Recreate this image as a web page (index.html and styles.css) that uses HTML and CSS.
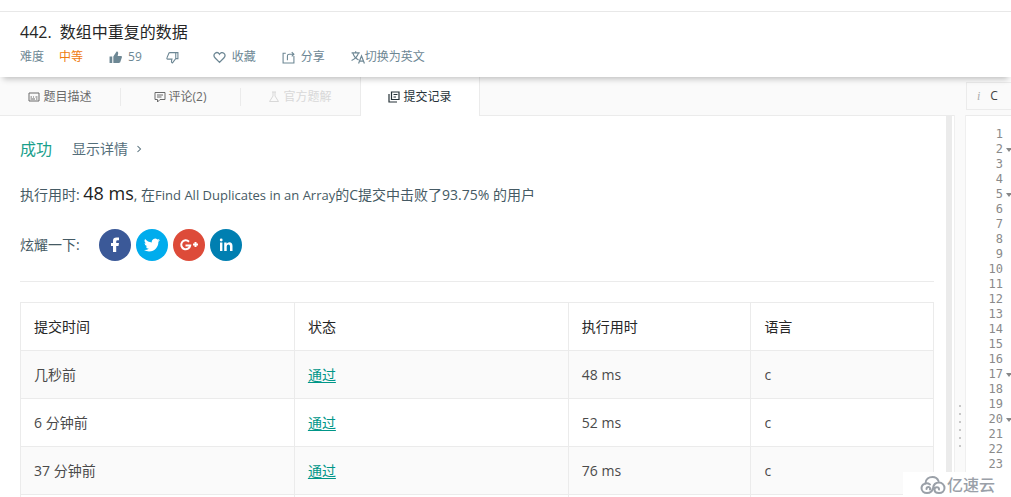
FILE: index.html
```html
<!DOCTYPE html>
<html lang="zh-CN">
<head>
<meta charset="utf-8">
<title>442. 数组中重复的数据</title>
<link rel="stylesheet" href="styles.css">
</head>
<body>
<div class="topbar"></div>
<header class="header">
  <h1 class="title"><span>442.</span><span>数组中重复的数据</span></h1>
  <div class="meta">
    <span class="level-label">难度</span>
    <span class="level">中等</span>
    <button class="action up"><svg viewBox="0 0 24 24" width="13" height="13"><path fill="currentColor" d="M1 10h5v12H1zM8 22V10l6-9c2 0 3 1 3 3l-1 5h6c1 0 2 1 2 2l-3 9c0 1-1 2-3 2z"/></svg>59</button>
    <button class="action down" aria-label="踩"><svg viewBox="0 0 24 24" width="13" height="13"><path fill="none" stroke="currentColor" stroke-width="2" d="M18 3v11l-6 8c-2 0-2-1-2-3l1-4H3c-1 0-2-1-1-3l3-7c0-1 1-2 2-2zM18 3h4v11h-4"/></svg></button>
    <button class="action fav"><svg viewBox="0 0 24 24" width="13" height="13"><path fill="none" stroke="currentColor" stroke-width="2.4" d="M12 21L4 13C1 10 1 6 4 4c3-2 6-1 8 2 2-3 5-4 8-2 3 2 3 6 0 9z"/></svg>收藏</button>
    <button class="action share"><svg viewBox="0 0 24 24" width="13" height="13"><path fill="none" stroke="currentColor" stroke-width="2" d="M7 4H2v18h20V9M10 17V9q0-3 3-3h8M18 2l4 4-4 4"/></svg>分享</button>
    <button class="action lang"><svg viewBox="0 0 24 24" width="14" height="14"><path fill="none" stroke="currentColor" stroke-width="2" d="M1 5h14M8 2v3M3 5q3 9 10 12M13 5Q10 14 1 18M13 23l5-13 5 13M15 19h6"/></svg>切换为英文</button>
  </div>
</header>
<main class="workspace">
  <section class="left">
    <nav class="tabs">
      <button class="tab"><svg viewBox="0 0 24 24" width="12" height="12"><path fill="none" stroke="currentColor" stroke-width="2" d="M2 4h20v16H2zM5 12h3m2 0h2m3 0h4M5 16h9m2 0h3"/></svg>题目描述</button>
      <button class="tab"><svg viewBox="0 0 24 24" width="12" height="12"><path fill="none" stroke="currentColor" stroke-width="2" d="M2 3h20v14H12l-5 5v-5H2zM6 8h12M6 12h9"/></svg>评论(2)</button>
      <button class="tab disabled" disabled><svg viewBox="0 0 24 24" width="12" height="12"><path fill="none" stroke="currentColor" stroke-width="2" d="M8 2h8M10 2v8L3 21h18L14 10V2"/></svg>官方题解</button>
      <button class="tab active"><svg viewBox="0 0 24 24" width="12" height="12"><path fill="none" stroke="currentColor" stroke-width="2.4" d="M7 2h15v15H7zM2 6v16h16M11 7h8M11 12h5"/></svg>提交记录</button>
    </nav>
    <div class="scroll">
      <div class="result">
        <span class="success">成功</span>
        <a class="detail" href="#detail">显示详情<svg viewBox="0 0 8 10" width="6" height="8"><path fill="none" stroke="currentColor" stroke-width="1.4" d="M2 1l4 4-4 4"/></svg></a>
      </div>
      <p class="runtime">执行用时: <span class="time">48 ms</span>, 在<span class="latin">Find All Duplicates in an Array</span>的C提交中击败了93.75% 的用户</p>
      <div class="social">
        <span class="social-label">炫耀一下:</span>
        <button class="round facebook" aria-label="Facebook"><svg viewBox="0 0 32 32" width="32" height="32"><path fill="#fff" d="M14 23v-6h-2v-3h2v-2.200q0-3.300 3.500-3.300H20v2.800h-1.500q-1.300 0-1.300 1.200V14H20l-.500 3h-2.300v6z"/></svg></button>
        <button class="round twitter" aria-label="Twitter"><svg viewBox="0 0 24 24" width="16" height="16"><path fill="#fff" d="M23.950 4.570a10 10 0 0 1-2.820.77 4.960 4.960 0 0 0 2.160-2.720c-.95.550-2 .950-3.130 1.180a4.920 4.920 0 0 0-8.380 4.480C7.690 8.100 4.070 6.130 1.640 3.160a4.920 4.920 0 0 0 1.520 6.570 4.900 4.900 0 0 1-2.230-.61v.06a4.920 4.920 0 0 0 3.950 4.830 5 5 0 0 1-2.210.08 4.930 4.930 0 0 0 4.600 3.420A9.870 9.870 0 0 1 0 19.540a14 14 0 0 0 7.550 2.210c9.050 0 14-7.500 14-13.980v-.64a10 10 0 0 0 2.400-2.560z"/></svg></button>
        <button class="round google" aria-label="Google+"><svg viewBox="0 0 32 32" width="32" height="32"><path fill="none" stroke="#fff" stroke-width="2" d="M16 12.700a4.500 4.500 0 1 0 1.200 3.800h-4.700M20 15.500h5M22.500 13v5"/></svg></button>
        <button class="round linkedin" aria-label="LinkedIn"><svg viewBox="0 0 32 32" width="32" height="32"><path fill="#fff" d="M10 13.500h2.400V22H10zM14.200 13.500h2.400v1.200q.9-1.500 2.700-1.500 3.200 0 3.200 3.800v5H20v-4.500q0-2.100-1.500-2.100-1.800 0-1.800 2.100V22h-2.500z"/><circle cx="11.200" cy="11" r="1.400" fill="#fff"/></svg></button>
      </div>
      <table class="records">
        <thead><tr><th class="wide">提交时间</th><th class="wide">状态</th><th>执行用时</th><th>语言</th></tr></thead>
        <tbody>
          <tr><td>几秒前</td><td><a href="#1">通过</a></td><td>48 ms</td><td>c</td></tr>
          <tr><td>6 分钟前</td><td><a href="#2">通过</a></td><td>52 ms</td><td>c</td></tr>
          <tr><td>37 分钟前</td><td><a href="#3">通过</a></td><td>76 ms</td><td>c</td></tr>
          <tr><td></td><td></td><td></td><td></td></tr>
        </tbody>
      </table>
    </div>
  </section>
  <div class="divider">
    <div class="divider-top"></div>
    <div class="splitter"><i></i><i></i><i></i><i></i><i></i><i></i></div>
  </div>
  <section class="editor">
    <div class="editor-bar"><button class="language"><em>i</em>C</button></div>
    <ol class="lines">
      <li>1</li><li class="fold">2</li><li>3</li><li>4</li><li class="fold">5</li><li>6</li><li>7</li><li>8</li><li>9</li><li>10</li><li>11</li><li>12</li><li>13</li><li>14</li><li>15</li><li>16</li><li class="fold">17</li><li>18</li><li>19</li><li class="fold">20</li><li>21</li><li>22</li><li>23</li>
    </ol>
  </section>
</main>
<div class="brand"><svg viewBox="0 0 26 20" width="26" height="20"><g fill="none" stroke="#9aa0a8" stroke-width="2" stroke-linecap="round"><path d="M5.500 8.500C5.500 4 9 2 12.500 2c3 0 5 1.500 6 4"/><path d="M10 9.500C6.500 7 1.500 9 1.500 13c0 3 2.500 5 5.500 5 4 0 5.500-2.500 6-5 .6-3.500 3-5.500 6-5.500s5.500 2.500 5.500 5.500-2.500 5-5.500 5-4.500-1.500-4.500-3.500c0-3 5-3 4.500 0"/><path d="M6.500 14c0-3 4.500-2.500 3.500.5"/></g></svg>亿速云</div>
</body>
</html>
```
FILE: styles.css
```css
* {
  box-sizing: border-box;
}

body {
  margin: 0;
  height: 100vh;
  overflow: hidden;
  display: flex;
  flex-direction: column;
  background: #fff;
  color: #455a64;
  font: 14px/20px "Open Sans", "Noto Sans CJK SC", sans-serif;
}

button {
  margin: 0;
  padding: 0;
  border: 0;
  background: none;
  color: inherit;
  font: inherit;
}

svg {
  flex: none;
}

.topbar {
  flex: none;
  height: 12px;
  border-bottom: 1px solid #e8e8e8;
}

.header {
  flex: none;
  height: 65px;
  padding: 9px 20px 0;
  background: #fff;
  box-shadow: 0 5px 6px -3px rgba(0, 0, 0, 0.24);
  z-index: 1;
}

.title {
  display: flex;
  gap: 8px;
  margin: 0;
  color: #262626;
  font-size: 16px;
  font-weight: 400;
  line-height: 22px;
}

.meta {
  display: flex;
  align-items: center;
  padding-top: 4px;
  color: #6d8794;
  font-size: 12px;
}

.level {
  margin-left: 15px;
  color: #ef7b10;
}

.action {
  display: flex;
  align-items: center;
  gap: 6px;
}

.up,
.share,
.lang {
  margin-left: 26px;
}

.down {
  margin-left: 24px;
}

.fav {
  margin-left: 34px;
}

.lang {
  gap: 0;
}

.workspace {
  flex: 1;
  display: flex;
  min-height: 0;
}

.left {
  flex: 1;
  min-width: 0;
  display: flex;
  flex-direction: column;
}

.tabs {
  flex: none;
  display: flex;
  height: 39px;
  border-bottom: 1px solid #ebebeb;
  background: #fafafa;
}

.tab {
  position: relative;
  display: flex;
  width: 120px;
  height: 39px;
  align-items: center;
  justify-content: center;
  gap: 3px;
  color: #6a6a6a;
  font-size: 12px;
}

.tab:nth-child(-n+2)::after {
  content: "";
  position: absolute;
  right: -1px;
  height: 18px;
  border-right: 1px solid #ebebeb;
}

.disabled {
  color: #d8d8d8;
}

.active {
  border: solid #ebebeb;
  border-width: 0 1px;
  background: #fff;
  color: #263238;
}

.scroll {
  flex: 1;
  min-height: 0;
  overflow: hidden;
  margin-right: 2px;
  padding: 23px 12px 0 20px;
  border-right: 6px solid #ebebeb;
}

.result {
  display: flex;
  align-items: center;
  gap: 20px;
}

.success {
  color: #1a9f8c;
  font-size: 16px;
}

.detail {
  display: flex;
  align-items: center;
  gap: 8px;
  color: #546e7a;
  text-decoration: none;
}

.runtime {
  margin: 20px 0;
  line-height: 28px;
  white-space: nowrap;
}

.latin {
  font-size: 13px;
}

.time {
  color: #212121;
  font-size: 18px;
}

.social {
  display: flex;
  align-items: center;
  gap: 5px;
  padding-bottom: 20px;
  border-bottom: 1px solid #ebebeb;
}

.social-label {
  margin-right: 14px;
}

.round {
  display: flex;
  width: 32px;
  height: 32px;
  align-items: center;
  justify-content: center;
  border-radius: 50%;
}

.facebook {
  background: #3b5998;
}

.twitter {
  background: #00aced;
}

.google {
  background: #dd4b39;
}

.linkedin {
  background: #007fb1;
}

.records {
  width: 100%;
  margin-top: 20px;
  table-layout: fixed;
  border-collapse: collapse;
  color: #4a4a4a;
}

.records th,
.records td {
  height: 48px;
  padding: 0 13px;
  border: 1px solid #ebebeb;
  text-align: left;
  font-weight: 400;
}

.records th {
  width: 20%;
  color: #262626;
}

.records .wide {
  width: 30%;
}

.records tbody tr:nth-child(odd) {
  background: #fafafa;
}

.records a {
  color: #009688;
  text-underline-offset: 2px;
}

.divider {
  flex: none;
  display: flex;
  width: 12px;
  flex-direction: column;
}

.divider-top {
  height: 38px;
  background: #fafafa;
}

.splitter {
  flex: 1;
  display: flex;
  flex-direction: column;
  align-items: center;
  justify-content: flex-end;
  gap: 6px;
  padding-bottom: 50px;
  border: solid #efefef;
  border-width: 0 1px;
  background: #fafafa;
}

.splitter i {
  width: 2px;
  height: 2px;
  background: #c8c8c8;
}

.editor {
  flex: none;
  width: 45px;
}

.editor-bar {
  height: 39px;
  padding-top: 5px;
  border-bottom: 1px solid #ebebeb;
  background: #fafafa;
}

.language {
  display: flex;
  width: 100%;
  height: 28px;
  align-items: center;
  gap: 10px;
  padding-left: 10px;
  border: 1px solid #ebebeb;
  border-right: 0;
  color: #424242;
  font-size: 12px;
}

.language em {
  color: #aaa;
  font-family: "Liberation Serif", serif;
}

.lines {
  margin: 0;
  padding: 11px 8px 0 0;
  list-style: none;
  color: #8a8a8a;
  font: 12px/15px "DejaVu Sans Mono", monospace;
  text-align: right;
}

.lines li {
  position: relative;
}

.fold::after {
  content: "";
  position: absolute;
  top: 6px;
  right: -9px;
  border: 3px solid transparent;
  border-top: 4px solid #888;
  border-bottom: 0;
}

.brand {
  position: absolute;
  right: 0;
  bottom: 0;
  z-index: 2;
  display: flex;
  width: 108px;
  height: 25px;
  align-items: center;
  gap: 1px;
  padding-left: 17px;
  background: #fff;
  color: #9aa0a8;
  font-size: 16px;
  font-weight: 500;
}
```
